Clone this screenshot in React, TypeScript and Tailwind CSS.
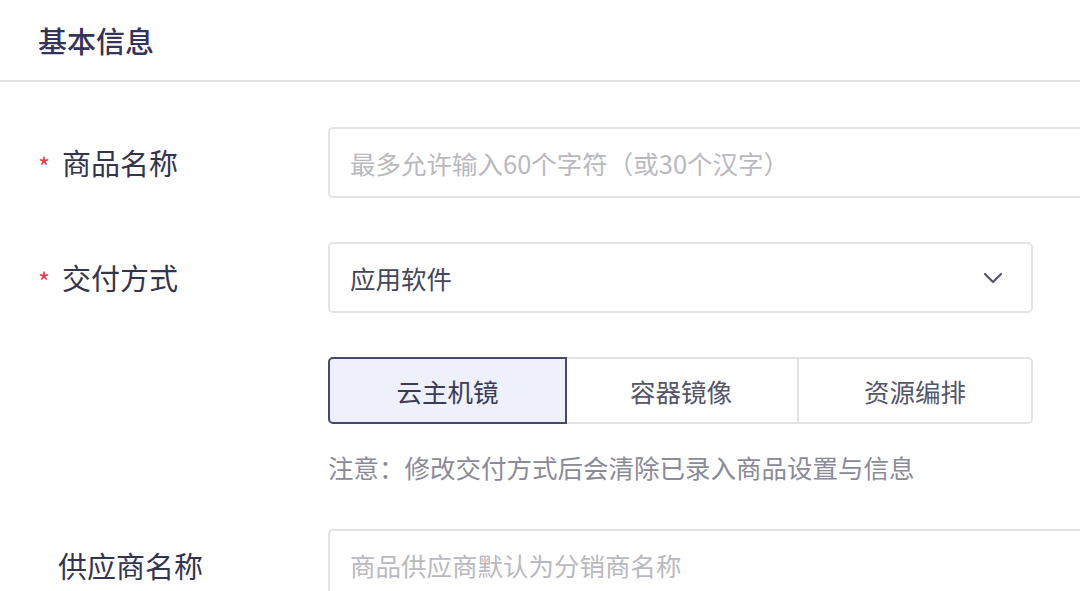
import React from "react";

const font = { fontFamily: '"Noto Sans CJK SC", "Noto Sans", sans-serif' };

export default function App() {
  return (
    <div
      className="w-[1080px] h-[591px] overflow-hidden bg-white"
      style={font}
    >
      <div className="h-[82px] flex items-center pl-[38px] border-b-2 border-[#e2e2e4]">
        <span className="text-[29px] leading-none text-[#34335a] font-medium">基本信息</span>
      </div>

      <div className="pt-[45px]">
        {/* Row 1 */}
        <div className="flex items-center">
          <div className="w-[328px] shrink-0 pl-[38px] flex items-center">
            <span className="text-[#d9434b] text-[26px] leading-none w-[24px] pt-[6px]">*</span>
            <span className="text-[29px] leading-none text-[#34344f]">商品名称</span>
          </div>
          <div className="w-[780px] shrink-0 h-[71px] border-2 border-[#e3e3e6] rounded-[5px] flex items-center pl-[20px]">
            <span className="text-[25.5px] text-[#b9b9bf] leading-none">最多允许输入60个字符（或30个汉字）</span>
          </div>
        </div>

        {/* Row 2 */}
        <div className="flex items-center mt-[44px]">
          <div className="w-[328px] shrink-0 pl-[38px] flex items-center">
            <span className="text-[#d9434b] text-[26px] leading-none w-[24px] pt-[6px]">*</span>
            <span className="text-[29px] leading-none text-[#34344f]">交付方式</span>
          </div>
          <div className="w-[705px] shrink-0 h-[71px] border-2 border-[#e3e3e6] rounded-[5px] flex items-center justify-between pl-[20px] pr-[28px]">
            <span className="text-[25.5px] text-[#45455a] leading-none">应用软件</span>
            <svg width="20" height="12" viewBox="0 0 20 12" fill="none">
              <path d="M2 2 L10 10 L18 2" stroke="#55556a" strokeWidth="2.2" strokeLinecap="round" strokeLinejoin="round" />
            </svg>
          </div>
        </div>

        {/* Segmented */}
        <div className="flex mt-[44px] ml-[328px]">
          <div className="w-[705px] h-[67px] flex rounded-[5px] border-2 border-[#e3e3e6]">
            <div className="w-[239px] -m-[2px] h-[67px] border-2 border-[#46486e] rounded-l-[5px] bg-[#eef0fb] flex items-center justify-center">
              <span className="text-[25.5px] text-[#3b3b55] leading-none">云主机镜</span>
            </div>
            <div className="w-[234px] flex items-center justify-center border-r-2 border-[#e3e3e6]">
              <span className="text-[25.5px] text-[#55556a] leading-none">容器镜像</span>
            </div>
            <div className="flex-1 flex items-center justify-center">
              <span className="text-[25.5px] text-[#55556a] leading-none">资源编排</span>
            </div>
          </div>
        </div>

        <div className="ml-[328px] mt-[28px] h-[30px] flex items-center">
          <span className="text-[25.5px] text-[#8a8a99] leading-none whitespace-nowrap">注意：修改交付方式后会清除已录入商品设置与信息</span>
        </div>

        {/* Row 4 */}
        <div className="flex items-start mt-[47px]">
          <div className="w-[328px] shrink-0 pl-[58px] pt-[22px]">
            <span className="text-[29px] leading-none text-[#34344f]">供应商名称</span>
          </div>
          <div className="w-[780px] shrink-0 h-[71px] border-2 border-[#e3e3e6] rounded-[5px] flex items-center pl-[20px]">
            <span className="text-[25.5px] text-[#b9b9bf] leading-none">商品供应商默认为分销商名称</span>
          </div>
        </div>
      </div>
    </div>
  );
}
